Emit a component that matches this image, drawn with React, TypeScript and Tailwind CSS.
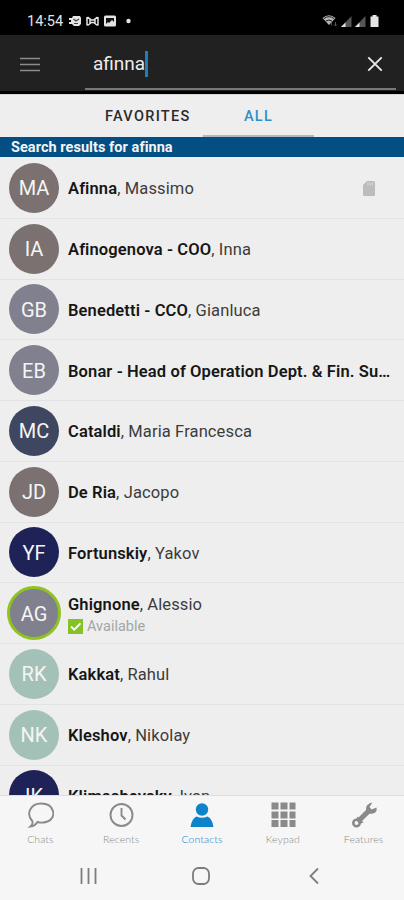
import type { ReactNode } from "react";

type Contact = {
  initials: string;
  last: string;
  first?: string;
  color: string;
  available?: boolean;
  card?: boolean;
};

const contacts: Contact[] = [
  { initials: "MA", last: "Afinna", first: "Massimo", color: "bg-[#7a7170]", card: true },
  { initials: "IA", last: "Afinogenova - COO", first: "Inna", color: "bg-[#7a7170]" },
  { initials: "GB", last: "Benedetti - CCO", first: "Gianluca", color: "bg-[#80808e]" },
  { initials: "EB", last: "Bonar - Head of Operation Dept. & Fin. Su…", color: "bg-[#80808e]" },
  { initials: "MC", last: "Cataldi", first: "Maria Francesca", color: "bg-[#3f465f]" },
  { initials: "JD", last: "De Ria", first: "Jacopo", color: "bg-[#7a7170]" },
  { initials: "YF", last: "Fortunskiy", first: "Yakov", color: "bg-[#1e2257]" },
  { initials: "AG", last: "Ghignone", first: "Alessio", color: "bg-[#80808e]", available: true },
  { initials: "RK", last: "Kakkat", first: "Rahul", color: "bg-[#a4c1b8]" },
  { initials: "NK", last: "Kleshov", first: "Nikolay", color: "bg-[#a4c1b8]" },
  { initials: "IK", last: "Klimashevsky", first: "Ivan", color: "bg-[#1e2257]" },
];

function StatusBar() {
  return (
    <div className="flex h-[35px] shrink-0 items-center bg-black pl-[27px] pr-[24px] pt-[7px] text-[#e4e4e4]">
      <span className="w-[41px] whitespace-nowrap pt-[2px] text-[14.5px] leading-none">14:54</span>
      <svg width="64" height="14" viewBox="0 0 64 14" fill="currentColor">
        <path d="M1 4h3l1-2h7l1 2v6l-2 2H6l-2-2H1V8h2V6H1z" />
        <path d="M5.500 5l2.500 2 3-2M6 9.500h4" fill="none" stroke="#444" strokeWidth="1.200" />
        <path d="M19 3v8.500M30 3v8.500M19.500 3l4 3h2l4-3M19.500 11.500l4-3h2l4 3M22 5v5M27 5v5" fill="none" stroke="currentColor" strokeWidth="1.500" />
        <rect x="36" y="1.500" width="12" height="11" rx="1.500" />
        <path d="M38 4h8v4l-2-2-3 3-1-1-2 2z" fill="#111" />
        <circle cx="60.500" cy="7" r="2.200" />
      </svg>
      <svg className="ml-auto" width="58" height="14" viewBox="0 0 58 14" fill="currentColor">
        <path d="M.5 4Q7-1.500 13.500 4L7 11z" fill="#b5b5b5" />
        <path d="M2 4.500Q7 .8 12 4.500M4 7q3-2 6 0" fill="none" stroke="#222" strokeWidth="1" />
        <path d="M9.500 11.500V8M9 8.500l1.500-1.500M13.500 8v4M12 10.500l1.500 1.500 1.500-1.500" stroke="#555" fill="none" />
        <path d="M19 13L29.500 2v11z" fill="#555" />
        <path d="M19 13l4.500-4.500V13z" />
        <path d="M33 13L43.500 2v11z" fill="#555" />
        <path d="M33 13l4.500-4.500V13z" />
        <path d="M50.500 1h4v1.500h2V13h-8V2.500h2z" />
      </svg>
    </div>
  );
}

function SearchBar() {
  return (
    <div className="flex h-[59px] shrink-0 border-b-[3px] border-black bg-[#212121] pl-5 pr-2">
      <svg className="mt-[22px]" width="20" height="15" viewBox="0 0 20 15" stroke="#8c8c8c" strokeWidth="1.500">
        <path d="M0 1.500h20M0 7.500h20M0 13.500h20" />
      </svg>
      <div className="ml-[45px] flex h-[55px] flex-1 items-center border-b-2 border-[#777] pl-2">
        <span className="pt-[5px] text-[19px] leading-6 text-[#ececec]">afinna</span>
        <span className="mt-1 h-[26px] w-[3px] bg-[#1681bd]" />
        <svg className="ml-auto mr-[13px] mt-[4px]" width="16" height="16" viewBox="0 0 16 16" stroke="#e8e8e8" strokeWidth="1.900">
          <path d="M1.300 1.300l13.400 13.400M14.700 1.300L1.300 14.700" />
        </svg>
      </div>
    </div>
  );
}

function Tabs() {
  return (
    <div className="flex h-[43px] shrink-0 border-t border-[#d8d8d8] text-[14.500px] font-medium leading-[43px]">
      <div className="ml-[92px] w-[111px] pl-[13px] tracking-[1.300px] text-[#2b2b2b]">FAVORITES</div>
      <div className="w-[111px] border-b-2 border-[#b4b7ba] text-center tracking-[1.300px] text-[#2f8fc9]">ALL</div>
    </div>
  );
}

function ContactRow({ contact }: { contact: Contact }) {
  const { initials, last, first, color, available, card } = contact;
  return (
    <div className="flex h-[60.750px] shrink-0 items-center border-b border-[#e3e3e3] pl-[9px]">
      <div
        className={`flex size-[50px] shrink-0 items-center justify-center rounded-full pt-px text-[20px] text-[#f5f5f5] ${color} ${
          available ? "outline-3 -outline-offset-1 outline-[#8fc31f]" : ""
        }`}
      >
        {initials}
      </div>
      <div className={`ml-[9px] w-[328px] ${available ? "pt-[4px]" : "pt-[2px]"}`}>
        <div className="whitespace-nowrap text-[16.500px] leading-[21px] tracking-[0.120px] text-[#3c3c3c]">
          <span className="font-semibold text-[#161616]">{last}</span>
          {first && `, ${first}`}
        </div>
        {available && (
          <div className="flex items-center pt-px text-[14.500px] leading-[21px] text-[#a5a5a5]">
            <svg className="mr-[4px]" width="15" height="15" viewBox="0 0 15 15">
              <rect width="15" height="15" fill="#84c225" />
              <path d="M3 7.500l3.200 3.200L12.500 4.300" fill="none" stroke="#fff" strokeWidth="1.800" />
            </svg>
            Available
          </div>
        )}
      </div>
      {card && (
        <svg className="-ml-[33px] mt-px" width="12" height="15" viewBox="0 0 12 15" fill="#bcbcbc">
          <path d="M4 0h6.500Q12 0 12 1.500v12q0 1.500-1.500 1.500h-9Q0 15 0 13.500V4z" />
          <path d="M5 1.500v3M7.300 1.500v3M9.600 1.500v3" stroke="#dcdcdc" />
        </svg>
      )}
    </div>
  );
}

function NavItem({ label, active, children }: { label: string; active?: boolean; children: ReactNode }) {
  return (
    <div className={`flex w-[80.800px] flex-col items-center pt-[5px] ${active ? "text-[#0d83cb]" : "text-[#8a8a8a]"}`}>
      <svg width="28" height="28" viewBox="0 0 28 28" fill="none" stroke="currentColor" strokeWidth="1.900">
        {children}
      </svg>
      <span className="mt-[3px] font-[Lato] text-[10.500px] font-light leading-[14px] tracking-[0.100px]">{label}</span>
    </div>
  );
}

function BottomNav() {
  return (
    <div className="flex h-[53px] shrink-0 border-t border-[#dedede]">
      <NavItem label="Chats">
        <path d="M6.500 20.500C-1 12 5.500 2.500 15 2.500C29 2.500 31 17 21.500 20.500q-5.500 2-10 .5Q9 25 4.500 25.500 7 23.500 6.500 20.500z" />
      </NavItem>
      <NavItem label="Recents">
        <circle cx="14.500" cy="14" r="11" />
        <path d="M14.500 7v7.500l4 4" />
      </NavItem>
      <NavItem label="Contacts" active>
        <g fill="currentColor" stroke="none">
          <circle cx="14" cy="8.500" r="6.200" />
          <path d="M2.500 26Q3.500 18 8.500 15.500q5.500 2.500 11 0Q24.500 18 25.500 26z" />
        </g>
      </NavItem>
      <NavItem label="Keypad">
        <path d="M2.500 5h24M2.500 14h24M2.500 22.500h24" strokeWidth="7" strokeDasharray="7 2" />
      </NavItem>
      <NavItem label="Features">
        <g fill="currentColor" stroke="none">
          <path d="M22.500 1.500L19.500 6l2 2.500 5-2q1 5-3.500 6-2.500.5-3.500.2L11.500 20.500 8 17l8-8Q15 3 22.500 1.500z" />
          <path d="M7.500 15.500l6 6-3.500 1.500-4-4z" />
        </g>
        <circle cx="6.500" cy="22" r="3.200" strokeWidth="2.600" />
      </NavItem>
    </div>
  );
}

export default function App() {
  return (
    <div className="flex h-[900px] w-[404px] flex-col overflow-hidden bg-[#eee] font-[Roboto,sans-serif]">
      <StatusBar />
      <SearchBar />
      <Tabs />
      <div className="h-[20px] shrink-0 bg-[#034f84] pl-[11px] text-[14.500px] font-bold leading-[21px] tracking-[0.050px] text-[#f4f4f4]">
        Search results for afinna
      </div>
      <div className="flex min-h-0 flex-1 flex-col overflow-hidden pt-[1px]">
        {contacts.map((contact) => (
          <ContactRow key={contact.initials} contact={contact} />
        ))}
      </div>
      <div className="flex h-[105px] shrink-0 flex-col bg-[#f6f6f6]">
        <BottomNav />
        <div className="flex h-[52px] items-center pl-[80px] pt-[4px]">
          <svg width="242" height="20" viewBox="0 0 242 20" fill="none" stroke="#7c7c7c" strokeWidth="1.800">
            <path d="M1.500 2v16M8.500 2v16M15.500 2v16" />
            <rect x="113" y="2" width="16" height="16" rx="5.500" />
            <path d="M238 2.500L230.500 10l7.500 7.500" />
          </svg>
        </div>
      </div>
    </div>
  );
}
